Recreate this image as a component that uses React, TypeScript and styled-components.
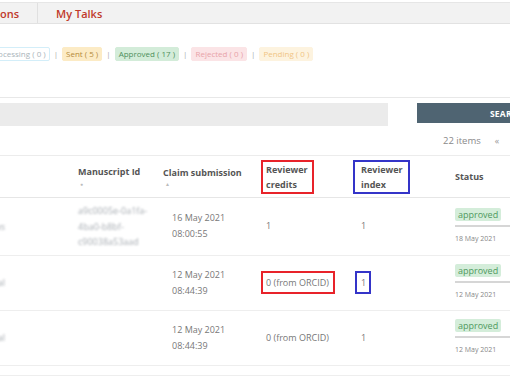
import React from 'react';
import styled, { createGlobalStyle } from 'styled-components';

const GlobalStyle = createGlobalStyle`
  html, body {
    margin: 0;
    padding: 0;
    background: #fff;
  }
  body {
    font-family: 'Open Sans', 'Liberation Sans', sans-serif;
    overflow: hidden;
  }
`;

// the screenshot is a crop of a wider page, so the page is shifted left
const Viewport = styled.div`
  width: 510px;
  height: 382px;
  overflow: hidden;
`;

const Page = styled.div`
  width: 760px;
  margin-left: -80px;
  padding-top: 2px;
`;

const TabBar = styled.nav`
  display: flex;
  height: 20px;
  padding-left: 16px;
  background: #f2f2f2;
  border-top: 1px solid #e6e6e6;
  border-bottom: 1px solid #e2e2e2;
`;

const Tab = styled.a`
  display: flex;
  align-items: center;
  padding: 0 18px;
  font-size: 11px;
  font-weight: 600;
  color: #c0392b;
  text-decoration: none;

  & + & {
    border-left: 1px solid #e0e0e0;
  }
`;

const FilterPanel = styled.section`
  height: 50px;
  display: flex;
  align-items: flex-start;
  padding: 23px 0 0 66px;
  border-bottom: 1px solid #e8e8e8;
`;

const chipColors: Record<string, { bg: string; fg: string; border: string }> = {
  processing: { bg: '#fff', fg: '#a9b4ba', border: '#d3eef9' },
  sent: { bg: '#fcebc5', fg: '#b48a3a', border: '#fcebc5' },
  approved: { bg: '#d3ecd9', fg: '#4e8f5b', border: '#d3ecd9' },
  rejected: { bg: '#fbe4e6', fg: '#e8a3a9', border: '#fbe4e6' },
  pending: { bg: '#fdf3df', fg: '#f0c585', border: '#fdf3df' },
};

const Chip = styled.span<{ $kind: string }>`
  font-size: 8px;
  line-height: 12px;
  padding: 0 3px;
  border-radius: 2px;
  background: ${(p) => chipColors[p.$kind].bg};
  color: ${(p) => chipColors[p.$kind].fg};
  border: 1px solid ${(p) => chipColors[p.$kind].border};
`;

const Sep = styled.span`
  font-size: 8px;
  line-height: 14px;
  color: #aaa;
  margin: 0 4px;
`;

const SearchRow = styled.div`
  display: flex;
  align-items: flex-start;
  margin-top: 5px;
`;

const SearchInput = styled.div`
  width: 468px;
  height: 23px;
  background: #ebebeb;
`;

const SearchButton = styled.button`
  margin-left: 29px;
  width: 180px;
  height: 20px;
  border: none;
  background: #4f6472;
  color: #fff;
  font-family: inherit;
  font-size: 8.5px;
  font-weight: 700;
  letter-spacing: 0.2px;
`;

const Pager = styled.div`
  display: flex;
  align-items: center;
  height: 29px;
  padding-left: 523px;
  font-size: 9.5px;
  color: #8a8a8a;
`;

const PagerArrow = styled.span`
  margin-left: 14px;
  font-size: 9px;
  color: #999;
`;

const cols = '153px 85px 103px 95px 94px 1fr';

const HeadRow = styled.div`
  display: grid;
  grid-template-columns: ${cols};
  min-height: 41px;
  border-top: 1px solid #ececec;
  border-bottom: 1px solid #e6e6e6;
`;

const HeadCell = styled.div`
  display: flex;
  flex-direction: column;
  justify-content: center;
  align-items: flex-start;
  padding: 0 5px;
  font-size: 9px;
  font-weight: 700;
  line-height: 15px;
  color: #555;
`;

const SortIcon = styled.span<{ $lift?: boolean }>`
  font-size: 5px;
  line-height: ${(p) => (p.$lift ? '8px' : '10px')};
  color: #bbb;
  padding-left: 2px;
`;

const Row = styled.div`
  display: grid;
  grid-template-columns: ${cols};
  min-height: 54px;
  border-bottom: 1px solid #eee;
`;

const Cell = styled.div<{ $indent?: number }>`
  display: flex;
  flex-direction: column;
  justify-content: center;
  align-items: flex-start;
  padding: 5px 5px 5px ${(p) => p.$indent ?? 5}px;
  font-size: 9px;
  line-height: 16px;
  color: #777;
`;

const Blurred = styled.span<{ $right?: boolean }>`
  align-self: ${(p) => (p.$right ? 'flex-end' : 'flex-start')};
  padding-right: ${(p) => (p.$right ? '63px' : '0')};
  line-height: 15.5px;
  color: #a8adb3;
  filter: blur(1px);
`;

const Mark = styled.span<{ $color: string; $pl: number; $pr: number; $py?: number }>`
  display: inline-block;
  border: 2px solid ${(p) => p.$color};
  padding: ${(p) => p.$py ?? 0}px ${(p) => p.$pr}px ${(p) => p.$py ?? 0}px ${(p) => p.$pl}px;
  margin-left: ${(p) => -(p.$pl + 2)}px;
  line-height: 15px;
`;

const StatusCell = styled.div`
  display: flex;
  flex-direction: column;
  justify-content: center;
  padding: 5px 0 5px 5px;
`;

const Badge = styled.span`
  align-self: flex-start;
  font-size: 9px;
  line-height: 13px;
  padding: 0 3px;
  border-radius: 2px;
  background: #d4edda;
  color: #4f9a5e;
`;

const Rule = styled.div`
  height: 2px;
  margin-top: 4px;
  background: #d6d6d6;
`;

const SmallDate = styled.span`
  margin-top: 6px;
  font-size: 7px;
  line-height: 12px;
  color: #888;
`;

const TableEnd = styled.div`
  height: 9px;
  border-bottom: 1px solid #eee;
`;

const RED = '#e8232a';
const BLUE = '#3434c8';

type Item = {
  lead: string;
  id: string[];
  date: string;
  time: string;
  credits: string;
  index: string;
  decided: string;
  marked?: boolean;
};

const items: Item[] = [
  {
    lead: 'Reviews',
    id: ['a9c0005e-0a1fa-', '4ba0-b8bf-', 'c90038a53aad'],
    date: '16 May 2021',
    time: '08:00:55',
    credits: '1',
    index: '1',
    decided: '18 May 2021',
  },
  {
    lead: 'Journal',
    id: [],
    date: '12 May 2021',
    time: '08:44:39',
    credits: '0 (from ORCID)',
    index: '1',
    decided: '12 May 2021',
    marked: true,
  },
  {
    lead: 'Journal',
    id: [],
    date: '12 May 2021',
    time: '08:44:39',
    credits: '0 (from ORCID)',
    index: '1',
    decided: '12 May 2021',
  },
];

const App: React.FC = () => {
  return (
    <Viewport>
      <GlobalStyle />
      <Page>
        <TabBar>
          <Tab>Publications</Tab>
          <Tab>My Talks</Tab>
        </TabBar>

        <FilterPanel>
          <Chip $kind="processing">Processing ( 0 )</Chip>
          <Sep>|</Sep>
          <Chip $kind="sent">Sent ( 5 )</Chip>
          <Sep>|</Sep>
          <Chip $kind="approved">Approved ( 17 )</Chip>
          <Sep>|</Sep>
          <Chip $kind="rejected">Rejected ( 0 )</Chip>
          <Sep>|</Sep>
          <Chip $kind="pending">Pending ( 0 )</Chip>
        </FilterPanel>

        <SearchRow>
          <SearchInput />
          <SearchButton>SEARCH</SearchButton>
        </SearchRow>

        <Pager>
          22 items
          <PagerArrow>«</PagerArrow>
        </Pager>

        <HeadRow>
          <HeadCell />
          <HeadCell>
            Manuscript Id
            <SortIcon>●</SortIcon>
          </HeadCell>
          <HeadCell>
            Claim submission
            <SortIcon $lift>▲</SortIcon>
          </HeadCell>
          <HeadCell>
            <Mark $color={RED} $pl={3} $pr={4}>
              Reviewer
              <br />
              credits
            </Mark>
          </HeadCell>
          <HeadCell>
            <Mark $color={BLUE} $pl={6} $pr={5}>
              Reviewer
              <br />
              index
            </Mark>
          </HeadCell>
          <HeadCell>Status</HeadCell>
        </HeadRow>

        {items.map((it, i) => (
          <Row key={i}>
            <Cell>
              <Blurred $right>{it.lead}</Blurred>
            </Cell>
            <Cell>
              {it.id.map((line) => (
                <Blurred key={line}>{line}</Blurred>
              ))}
            </Cell>
            <Cell $indent={14}>
              <span>{it.date}</span>
              <span>{it.time}</span>
            </Cell>
            <Cell>
              {it.marked ? (
                <Mark $color={RED} $pl={3} $pr={4} $py={2}>
                  {it.credits}
                </Mark>
              ) : (
                it.credits
              )}
            </Cell>
            <Cell>
              {it.marked ? (
                <Mark $color={BLUE} $pl={4} $pr={3} $py={2}>
                  {it.index}
                </Mark>
              ) : (
                it.index
              )}
            </Cell>
            <StatusCell>
              <Badge>approved</Badge>
              <Rule />
              <SmallDate>{it.decided}</SmallDate>
            </StatusCell>
          </Row>
        ))}
        <TableEnd />
      </Page>
    </Viewport>
  );
};

export default App;
